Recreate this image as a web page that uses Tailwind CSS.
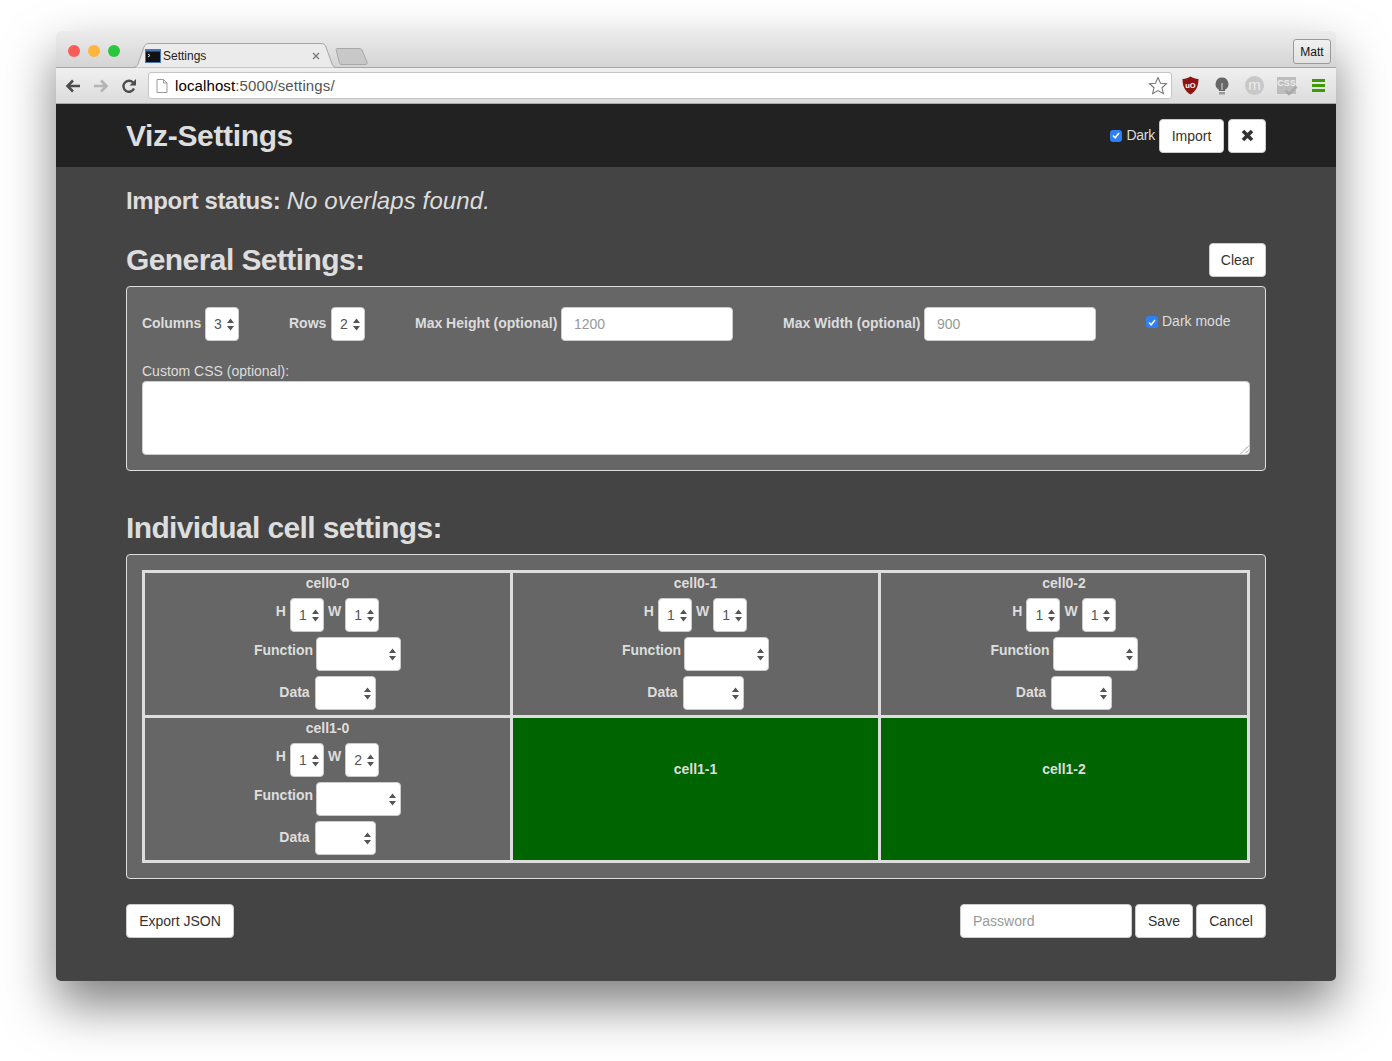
<!DOCTYPE html>
<html lang="en">
<head>
<meta charset="UTF-8">
<title>Settings</title>
<script src="https://cdn.jsdelivr.net/npm/@tailwindcss/browser@4"></script>
</head>
<body class="bg-white font-['Liberation_Sans',Arial,sans-serif] overflow-hidden h-[1061px]">
<div class="pt-[31px] px-[56px]">
  <div class="w-[1280px] h-[950px] rounded-[5px] overflow-hidden shadow-[0_24px_50px_0_rgba(0,0,0,0.5)] flex flex-col">

    <!-- tab strip -->
    <div class="h-[37px] shrink-0 relative bg-gradient-to-b from-[#ececec] to-[#d4d4d4] border-b border-[#a5a5a5] flex">
      <div class="flex gap-2 pl-3 pt-[14px]">
        <span class="w-3 h-3 rounded-full bg-[#fc5b57] block"></span>
        <span class="w-3 h-3 rounded-full bg-[#fdb53a] block"></span>
        <span class="w-3 h-3 rounded-full bg-[#27c83f] block"></span>
      </div>
      <div class="absolute left-[74px] top-[12px] w-[212px] h-[25px]">
        <svg class="absolute inset-0" width="212" height="25" viewBox="0 0 212 25"><path d="M0 24.5H3C6 24.5 7 23 8 21L14 4C15 1.500 16 .5 19 .5H191C194 .5 195 1.500 196 4L202 21C203 23 204 24.500 207 24.500H212" fill="#ebebeb" stroke="#a5a5a5"/></svg>
        <div class="relative flex items-center h-[25px] pl-[15px]">
          <svg width="16" height="14" viewBox="0 0 16 14" class="shrink-0"><rect width="16" height="14" fill="#4a76b8"/><rect x="1" y="2.500" width="14" height="10.500" fill="#111"/><path d="M3 5l2 1.500-2 1.500" stroke="#eee" fill="none"/></svg>
          <span class="text-[12px] text-[#222] ml-[2px]">Settings</span>
        </div>
        <svg class="absolute left-[182px] top-[9px]" width="8" height="8" viewBox="0 0 8 8"><path d="M1 1l6 6M7 1l-6 6" stroke="#777" stroke-width="1.300"/></svg>
      </div>
      <svg class="absolute left-[279px] top-[17px]" width="34" height="17" viewBox="0 0 34 17"><path d="M1 1.500C1 1 1.500 .5 2 .5H24C26 .5 26.500 1 27 2L32 14C32.500 15.500 32 16.500 30 16.500H7C5.500 16.500 5 16 4.500 15Z" fill="#c8c8c8" stroke="#a8a8a8"/></svg>
      <div class="absolute right-[5px] top-[8px] w-[38px] h-[25px] rounded-[3px] border border-[#9a9a9a] bg-gradient-to-b from-[#f0f0f0] to-[#e2e2e2] text-[12px] text-[#111] flex items-center justify-center">Matt</div>
    </div>

    <!-- toolbar -->
    <div class="h-[36px] shrink-0 bg-gradient-to-b from-[#f0f0f0] to-[#dcdcdc] border-b border-[#a8a8a8] flex items-center pl-[9px]">
      <svg width="16" height="14" viewBox="0 0 16 14"><path d="M15 7H3M8 1.500 2.500 7 8 12.500" fill="none" stroke="#4d4d4d" stroke-width="2.600"/></svg>
      <svg class="ml-[12px]" width="16" height="14" viewBox="0 0 16 14"><path d="M1 7H13M8 1.500 13.500 7 8 12.500" fill="none" stroke="#b4b4b4" stroke-width="2.600"/></svg>
      <svg class="ml-[12px]" width="16" height="16" viewBox="0 0 16 16"><path d="M13 10.500A5.500 5.500 0 1 1 12 4.500" fill="none" stroke="#4d4d4d" stroke-width="2.400"/><path d="M15 1v6.500H8.500Z" fill="#4d4d4d"/></svg>
      <div class="ml-[11px] w-[1024px] h-[27px] bg-white border border-[#c4c4c4] rounded-[3px] flex items-center pl-[7px] pr-[3px]">
        <svg width="12" height="14" viewBox="0 0 12 14"><path d="M1 .5H7.500L11 4V13.500H1ZM7.500 .5V4H11" fill="#fff" stroke="#9a9a9a"/></svg>
        <span class="ml-[7px] mt-[1px] text-[15px] tracking-[0.12px] text-black">localhost<span class="text-[#555]">:5000/settings/</span></span>
        <svg class="ml-auto" width="20" height="19" viewBox="0 0 20 19"><path d="M10 1.500 12.500 7.200 18.500 7.700 14 11.800 15.400 17.700 10 14.600 4.600 17.700 6 11.800 1.500 7.700 7.500 7.200Z" fill="#fff" stroke="#777" stroke-width="1.100"/></svg>
      </div>
      <svg class="ml-[10px]" width="17" height="19" viewBox="0 0 17 19"><path d="M8.500 .5C11 2 13.500 2.800 16.500 3 16.500 10 14 15.500 8.500 18.500 3 15.500 .5 10 .5 3 3.500 2.800 6 2 8.500 .5Z" fill="#8e1411"/><text x="8.500" y="11.500" text-anchor="middle" font-size="7.500" font-weight="700" fill="#fff">uO</text></svg>
      <svg class="ml-[16px]" width="14" height="18" viewBox="0 0 14 18"><path d="M7 .5A6.500 6.500 0 0 1 10 12.700V14H4V12.700A6.500 6.500 0 0 1 7 .5Z" fill="#666"/><path d="M7 6v7" stroke="#ddd"/><rect x="4" y="15" width="6" height="2.500" fill="#999"/></svg>
      <div class="ml-[16px] w-[19px] h-[19px] rounded-full bg-[#c8c8c8] text-[#eee] text-[15px] leading-[17px] text-center">m</div>
      <div class="ml-[13px] relative w-[19px] h-[17px] bg-[#bdbdbd] text-[#eee] text-[9px] font-bold leading-[13px] text-center">CSS
        <svg class="absolute left-[7px] top-[8px]" width="14" height="11" viewBox="0 0 14 11"><path d="M1.500 5.500 5 9 12.500 1.500" fill="none" stroke="#a8a8a8" stroke-width="2.600"/></svg>
      </div>
      <div class="ml-[16px] w-[13px] flex flex-col gap-[2px]">
        <span class="block h-[3px] bg-[#3e9a05]"></span><span class="block h-[3px] bg-[#3e9a05]"></span><span class="block h-[3px] bg-[#3e9a05]"></span>
      </div>
    </div>

    <!-- navbar -->
    <div class="h-[63px] shrink-0 bg-[#222] px-[70px] flex items-center justify-between">
      <div class="text-[30px] font-bold text-[#ddd] tracking-[-0.35px]">Viz-Settings</div>
      <div class="flex items-center">
        <span class="w-3 h-3 rounded-[3px] bg-[#2f7ff5] flex items-center justify-center"><svg width="8" height="7" viewBox="0 0 8 7"><path d="M1 3.500 3.200 5.800 7 1" fill="none" stroke="#fff" stroke-width="1.500"/></svg></span>
        <span class="ml-[4px] text-[14px] text-[#ddd] font-normal tracking-[-0.25px]">Dark</span>
        <div class="ml-[4px] w-[65px] h-[34px] pt-[1px] bg-white rounded-[4px] border border-[#ccc] text-[14px] text-[#333] flex items-center justify-center">Import</div>
        <div class="ml-[4px] w-[38px] h-[34px] bg-white rounded-[4px] border border-[#ccc] flex items-center justify-center">
          <svg width="13" height="13" viewBox="0 0 13 13"><path d="M2 2 11 11M11 2 2 11" stroke="#333" stroke-width="3.600"/></svg>
        </div>
      </div>
    </div>

    <!-- page -->
    <div class="flex-1 bg-[#444] px-[70px]">
      <div class="h-[26px] mt-[21px] text-[24px] leading-[26px] text-[#ddd] font-bold tracking-[-0.4px]">Import status: <em class="font-normal tracking-[0.1px]">No overlaps found.</em></div>

      <div class="mt-[29px] h-[34px] flex items-center justify-between">
        <div class="mb-[2px] text-[30px] font-bold text-[#ddd] tracking-[-0.58px]">General Settings:</div>
        <div class="w-[57px] h-[34px] bg-white rounded-[4px] border border-[#ccc] text-[14px] text-[#333] flex items-center justify-center">Clear</div>
      </div>

      <div class="mt-[9px] h-[185px] bg-[#666] border border-[#ddd] rounded-[4px] px-[15px] pt-[20px]">
        <div class="flex items-center h-[34px]">
          <span class="w-[63px] mb-[2px] text-[14px] font-bold text-[#ddd] tracking-[-0.1px]">Columns</span>
          <div class="w-[34px] h-[34px] bg-white rounded-[4px] border border-[#ccc] flex items-center pl-[8px] text-[14px] text-[#555]">3<svg class="ml-[5.500px]" width="7" height="13" viewBox="0 0 7 13"><path d="M3.500 .5 7 5H0ZM3.500 12.500 0 8H7Z" fill="#555"/></svg></div>
          <span class="ml-[50px] mb-[2px] w-[42px] text-[14px] font-bold text-[#ddd]">Rows</span>
          <div class="w-[34px] h-[34px] bg-white rounded-[4px] border border-[#ccc] flex items-center pl-[8px] text-[14px] text-[#555]">2<svg class="ml-[5.500px]" width="7" height="13" viewBox="0 0 7 13"><path d="M3.500 .5 7 5H0ZM3.500 12.500 0 8H7Z" fill="#555"/></svg></div>
          <span class="ml-[50px] mb-[2px] w-[146px] text-[14px] font-bold text-[#ddd] whitespace-nowrap">Max Height (optional)</span>
          <div class="w-[172px] h-[34px] bg-white rounded-[4px] border border-[#ccc] flex items-center pl-[12px] text-[14px] text-[#999]">1200</div>
          <span class="ml-[50px] mb-[2px] w-[141px] text-[14px] font-bold text-[#ddd] whitespace-nowrap">Max Width (optional)</span>
          <div class="w-[172px] h-[34px] bg-white rounded-[4px] border border-[#ccc] flex items-center pl-[12px] text-[14px] text-[#999]">900</div>
          <span class="ml-[50px] mb-[4px] w-3 h-3 rounded-[3px] bg-[#2f7ff5] flex items-center justify-center"><svg width="8" height="7" viewBox="0 0 8 7"><path d="M1 3.500 3.200 5.800 7 1" fill="none" stroke="#fff" stroke-width="1.500"/></svg></span>
          <span class="ml-[4px] mb-[6px] text-[14px] text-[#ddd]">Dark mode</span>
        </div>
        <div class="mt-[22px] h-[18px] leading-[16px] text-[14px] text-[#ddd]">Custom CSS (optional):</div>
        <div class="relative h-[74px] bg-white rounded-[4px] border border-[#ccc]">
          <svg class="absolute right-0 bottom-0" width="9" height="9" viewBox="0 0 9 9"><path d="M8.500 1 1 8.500M8.500 5 5 8.500" stroke="#666" stroke-dasharray="1 .6"/></svg>
        </div>
      </div>

      <div class="mt-[39px] h-[34px] flex items-center text-[30px] font-bold text-[#ddd] tracking-[-0.63px]">Individual cell settings:</div>

      <div class="mt-[10px] h-[325px] bg-[#666] border border-[#ddd] rounded-[4px] p-[15px]">
        <div class="grid grid-cols-[365px_365px_1fr] grid-rows-2 gap-[3px] bg-[#ddd] p-[3px] w-[1108px] h-[293px] text-[14px] text-[#ddd] font-bold">

          <div class="bg-[#666] flex flex-col items-center">
            <div class="h-[20px] leading-[20px]">cell0-0</div>
            <div class="mt-[5px] flex items-center h-[34px]">
              <span class="mb-2 mr-[4px]">H</span>
              <div class="w-[34px] h-[34px] bg-white rounded-[4px] border border-[#ccc] flex items-center pl-[8px] font-normal text-[#555]">1<svg class="ml-[5px]" width="7" height="13" viewBox="0 0 7 13"><path d="M3.500 .5 7 5H0ZM3.500 12.500 0 8H7Z" fill="#555"/></svg></div>
              <span class="mb-2 mx-[4px]">W</span>
              <div class="w-[34px] h-[34px] bg-white rounded-[4px] border border-[#ccc] flex items-center pl-[8px] font-normal text-[#555]">1<svg class="ml-[5px]" width="7" height="13" viewBox="0 0 7 13"><path d="M3.500 .5 7 5H0ZM3.500 12.500 0 8H7Z" fill="#555"/></svg></div>
            </div>
            <div class="mt-[5px] flex items-center h-[34px]">
              <span class="mb-2 mr-[3px]">Function</span>
              <div class="w-[85px] h-[34px] bg-white rounded-[4px] border border-[#ccc] flex items-center justify-end pr-[4px]"><svg width="7" height="13" viewBox="0 0 7 13"><path d="M3.500 .5 7 5H0ZM3.500 12.500 0 8H7Z" fill="#555"/></svg></div>
            </div>
            <div class="mt-[5px] flex items-center h-[34px]">
              <span class="mb-[2px] mr-[5px]">Data</span>
              <div class="w-[61px] h-[34px] bg-white rounded-[4px] border border-[#ccc] flex items-center justify-end pr-[4px]"><svg width="7" height="13" viewBox="0 0 7 13"><path d="M3.500 .5 7 5H0ZM3.500 12.500 0 8H7Z" fill="#555"/></svg></div>
            </div>
          </div>

          <div class="bg-[#666] flex flex-col items-center">
            <div class="h-[20px] leading-[20px]">cell0-1</div>
            <div class="mt-[5px] flex items-center h-[34px]">
              <span class="mb-2 mr-[4px]">H</span>
              <div class="w-[34px] h-[34px] bg-white rounded-[4px] border border-[#ccc] flex items-center pl-[8px] font-normal text-[#555]">1<svg class="ml-[5px]" width="7" height="13" viewBox="0 0 7 13"><path d="M3.500 .5 7 5H0ZM3.500 12.500 0 8H7Z" fill="#555"/></svg></div>
              <span class="mb-2 mx-[4px]">W</span>
              <div class="w-[34px] h-[34px] bg-white rounded-[4px] border border-[#ccc] flex items-center pl-[8px] font-normal text-[#555]">1<svg class="ml-[5px]" width="7" height="13" viewBox="0 0 7 13"><path d="M3.500 .5 7 5H0ZM3.500 12.500 0 8H7Z" fill="#555"/></svg></div>
            </div>
            <div class="mt-[5px] flex items-center h-[34px]">
              <span class="mb-2 mr-[3px]">Function</span>
              <div class="w-[85px] h-[34px] bg-white rounded-[4px] border border-[#ccc] flex items-center justify-end pr-[4px]"><svg width="7" height="13" viewBox="0 0 7 13"><path d="M3.500 .5 7 5H0ZM3.500 12.500 0 8H7Z" fill="#555"/></svg></div>
            </div>
            <div class="mt-[5px] flex items-center h-[34px]">
              <span class="mb-[2px] mr-[5px]">Data</span>
              <div class="w-[61px] h-[34px] bg-white rounded-[4px] border border-[#ccc] flex items-center justify-end pr-[4px]"><svg width="7" height="13" viewBox="0 0 7 13"><path d="M3.500 .5 7 5H0ZM3.500 12.500 0 8H7Z" fill="#555"/></svg></div>
            </div>
          </div>

          <div class="bg-[#666] flex flex-col items-center">
            <div class="h-[20px] leading-[20px]">cell0-2</div>
            <div class="mt-[5px] flex items-center h-[34px]">
              <span class="mb-2 mr-[4px]">H</span>
              <div class="w-[34px] h-[34px] bg-white rounded-[4px] border border-[#ccc] flex items-center pl-[8px] font-normal text-[#555]">1<svg class="ml-[5px]" width="7" height="13" viewBox="0 0 7 13"><path d="M3.500 .5 7 5H0ZM3.500 12.500 0 8H7Z" fill="#555"/></svg></div>
              <span class="mb-2 mx-[4px]">W</span>
              <div class="w-[34px] h-[34px] bg-white rounded-[4px] border border-[#ccc] flex items-center pl-[8px] font-normal text-[#555]">1<svg class="ml-[5px]" width="7" height="13" viewBox="0 0 7 13"><path d="M3.500 .5 7 5H0ZM3.500 12.500 0 8H7Z" fill="#555"/></svg></div>
            </div>
            <div class="mt-[5px] flex items-center h-[34px]">
              <span class="mb-2 mr-[3px]">Function</span>
              <div class="w-[85px] h-[34px] bg-white rounded-[4px] border border-[#ccc] flex items-center justify-end pr-[4px]"><svg width="7" height="13" viewBox="0 0 7 13"><path d="M3.500 .5 7 5H0ZM3.500 12.500 0 8H7Z" fill="#555"/></svg></div>
            </div>
            <div class="mt-[5px] flex items-center h-[34px]">
              <span class="mb-[2px] mr-[5px]">Data</span>
              <div class="w-[61px] h-[34px] bg-white rounded-[4px] border border-[#ccc] flex items-center justify-end pr-[4px]"><svg width="7" height="13" viewBox="0 0 7 13"><path d="M3.500 .5 7 5H0ZM3.500 12.500 0 8H7Z" fill="#555"/></svg></div>
            </div>
          </div>

          <div class="bg-[#666] flex flex-col items-center">
            <div class="h-[20px] leading-[20px]">cell1-0</div>
            <div class="mt-[5px] flex items-center h-[34px]">
              <span class="mb-2 mr-[4px]">H</span>
              <div class="w-[34px] h-[34px] bg-white rounded-[4px] border border-[#ccc] flex items-center pl-[8px] font-normal text-[#555]">1<svg class="ml-[5px]" width="7" height="13" viewBox="0 0 7 13"><path d="M3.500 .5 7 5H0ZM3.500 12.500 0 8H7Z" fill="#555"/></svg></div>
              <span class="mb-2 mx-[4px]">W</span>
              <div class="w-[34px] h-[34px] bg-white rounded-[4px] border border-[#ccc] flex items-center pl-[8px] font-normal text-[#555]">2<svg class="ml-[5px]" width="7" height="13" viewBox="0 0 7 13"><path d="M3.500 .5 7 5H0ZM3.500 12.500 0 8H7Z" fill="#555"/></svg></div>
            </div>
            <div class="mt-[5px] flex items-center h-[34px]">
              <span class="mb-2 mr-[3px]">Function</span>
              <div class="w-[85px] h-[34px] bg-white rounded-[4px] border border-[#ccc] flex items-center justify-end pr-[4px]"><svg width="7" height="13" viewBox="0 0 7 13"><path d="M3.500 .5 7 5H0ZM3.500 12.500 0 8H7Z" fill="#555"/></svg></div>
            </div>
            <div class="mt-[5px] flex items-center h-[34px]">
              <span class="mb-[2px] mr-[5px]">Data</span>
              <div class="w-[61px] h-[34px] bg-white rounded-[4px] border border-[#ccc] flex items-center justify-end pr-[4px]"><svg width="7" height="13" viewBox="0 0 7 13"><path d="M3.500 .5 7 5H0ZM3.500 12.500 0 8H7Z" fill="#555"/></svg></div>
            </div>
          </div>

          <div class="bg-[#006400] text-center pt-[41px] leading-[20px]">cell1-1</div>
          <div class="bg-[#006400] text-center pt-[41px] leading-[20px]">cell1-2</div>
        </div>
      </div>

      <div class="mt-[25px] flex items-center">
        <div class="w-[108px] h-[34px] bg-white rounded-[4px] border border-[#ccc] text-[14px] text-[#333] flex items-center justify-center">Export JSON</div>
        <div class="ml-auto w-[172px] h-[34px] bg-white rounded-[4px] border border-[#ccc] flex items-center pl-[12px] text-[14px] text-[#999]">Password</div>
        <div class="ml-[3px] w-[58px] h-[34px] bg-white rounded-[4px] border border-[#ccc] text-[14px] text-[#333] flex items-center justify-center">Save</div>
        <div class="ml-[3px] w-[70px] h-[34px] bg-white rounded-[4px] border border-[#ccc] text-[14px] text-[#333] flex items-center justify-center">Cancel</div>
      </div>
    </div>
  </div>
</div>
</body>
</html>
